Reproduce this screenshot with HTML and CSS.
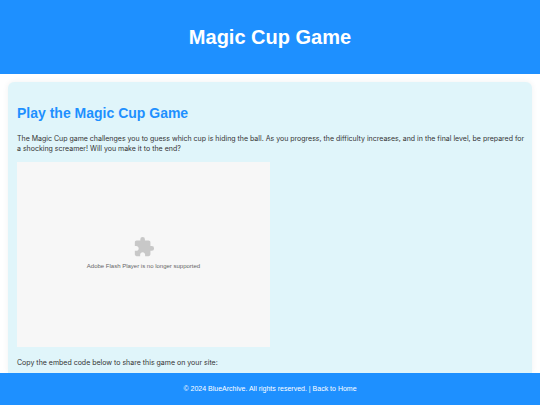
FILE: index.html
```html
<!DOCTYPE html>
<html lang="en">
<head>
  <meta charset="UTF-8">
  <meta name="viewport" content="width=device-width, initial-scale=1.0">
  <title>Magic Cup Game</title>
  <link rel="stylesheet" href="styles.css">
</head>
<body>

<header>
  <h1>Magic Cup Game</h1>
</header>

<main class="container">
  <h2>Play the Magic Cup Game</h2>
  <p>The Magic Cup game challenges you to guess which cup is hiding the ball. As you progress, the difficulty increases, and in the final level, be prepared for a shocking screamer! Will you make it to the end?</p>
  <div class="game-embed">
    <svg class="plugin-icon" viewBox="0 0 24 24" aria-hidden="true">
      <path d="M20.5 11H19V7c0-1.1-.9-2-2-2h-4V3.5a2.5 2.5 0 0 0-5 0V5H4c-1.1 0-1.99.9-1.99 2v3.8H3.500c1.490 0 2.700 1.210 2.700 2.700s-1.210 2.700-2.700 2.700H2V20c0 1.1.9 2 2 2h3.800v-1.500c0-1.490 1.210-2.700 2.700-2.700s2.700 1.210 2.700 2.700V22H17c1.1 0 2-.9 2-2v-4h1.5a2.5 2.5 0 0 0 0-5z"/>
    </svg>
    <span>Adobe Flash Player is no longer supported</span>
  </div>
  <p>Copy the embed code below to share this game on your site:</p>
</main>

<footer>
  <p>&copy; 2024 BlueArchive. All rights reserved. | <a href="index.html">Back to Home</a></p>
</footer>

</body>
</html>
```
FILE: styles.css
```css
body {
  display: flex;
  flex-direction: column;
  min-height: 100vh;
  margin: 0;
  background-color: #fff;
  color: #333;
  font-family: "Liberation Sans", Arial, sans-serif;
  font-size: 7px;
  line-height: 10px;
}

header {
  background-color: #1e90ff;
  color: white;
  padding: 24px 8px;
  text-align: center;
}

h1 {
  margin: 0;
  font-size: 20px;
  line-height: 26px;
}

.container {
  flex: 1;
  margin: 8px 8px 0;
  padding: 21px 5px 4px 9px;
  background-color: #e0f5fa;
  border-radius: 6px 6px 0 0;
  box-shadow: 0 0 6px rgba(0, 0, 0, 0.06);
}

h2 {
  margin: 0 0 11px;
  color: #1e90ff;
  font-size: 14px;
  line-height: 20px;
}

.container p {
  margin: 0 0 8px;
  font-family: Inter, "Liberation Sans", Arial, sans-serif;
}

.container p:last-child {
  margin-bottom: 0;
}

.game-embed {
  display: flex;
  box-sizing: border-box;
  flex-direction: column;
  align-items: center;
  justify-content: center;
  gap: 4px;
  width: 50%;
  max-width: 253px;
  aspect-ratio: 253 / 185;
  margin-bottom: 11px;
  padding-bottom: 3px;
  background-color: #f7f7f7;
  color: #666;
  font-size: 6px;
  line-height: 8px;
}

.plugin-icon {
  width: 22px;
  height: 22px;
  fill: #c8c8c8;
}

footer {
  background-color: #1e90ff;
  color: white;
  padding: 11px 8px;
  text-align: center;
  position: relative;
}

footer p {
  margin: 0;
}

footer a {
  color: white;
  text-decoration: none;
}
```
